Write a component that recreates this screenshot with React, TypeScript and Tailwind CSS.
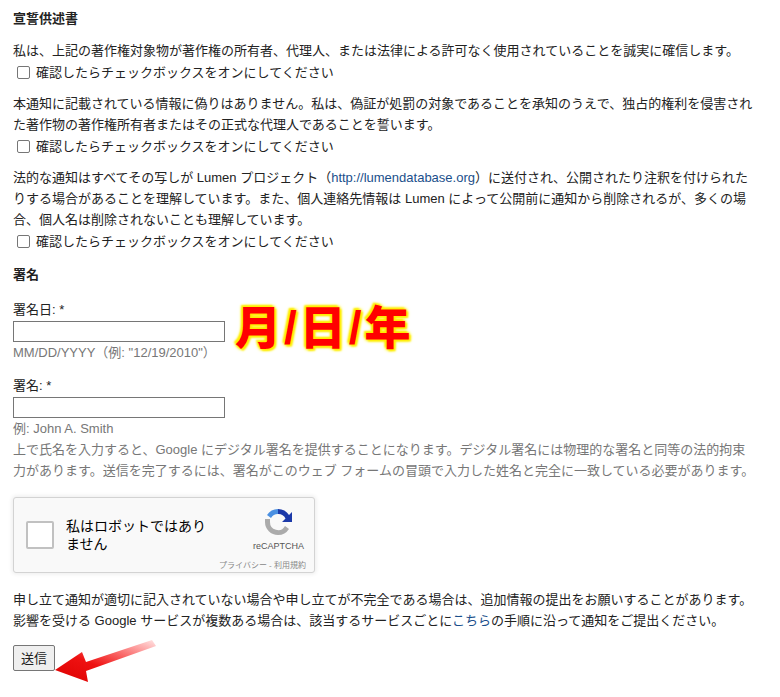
export default function App() {
  const cb = (
    <label className="flex items-center gap-[6px] ml-[4px] h-[22px]">
      <span className="w-[13px] h-[13px] border border-[#767676] rounded-[2px] bg-white" />
      <span>確認したらチェックボックスをオンにしてください</span>
    </label>
  );
  return (
    <div className="w-[780px] h-[697px] bg-white text-[13px] leading-[21px] text-[#222] pl-[13px] pr-[24px] pt-[8px] relative overflow-hidden" style={{ fontFamily: '"Liberation Sans", Arial, "Noto Sans CJK JP", sans-serif' }}>
      <div className="font-bold h-[22px]">宣誓供述書</div>
      <div className="mt-[10px]">私は、上記の著作権対象物が著作権の所有者、代理人、または法律による許可なく使用されていることを誠実に確信します。</div>
      {cb}
      <div className="mt-[10px]">本通知に記載されている情報に偽りはありません。私は、偽証が処罰の対象であることを承知のうえで、独占的権利を侵害された著作物の著作権所有者またはその正式な代理人であることを誓います。</div>
      {cb}
      <div className="mt-[10px]">法的な通知はすべてその写しが Lumen プロジェクト（<span className="text-[#1a4f8b]">http://lumendatabase.org</span>）に送付され、公開されたり注釈を付けられたりする場合があることを理解しています。また、個人連絡先情報は Lumen によって公開前に通知から削除されるが、多くの場合、個人名は削除されないことも理解しています。</div>
      {cb}
      <div className="font-bold mt-[12px]">署名</div>
      <div className="mt-[14px]">署名日: *</div>
      <div className="w-[212px] h-[21px] border border-[#767676] bg-white mt-[1px]" />
      <div className="text-[#777]">MM/DD/YYYY（例: "12/19/2010"）</div>
      <div className="mt-[12px]">署名: *</div>
      <div className="w-[212px] h-[21px] border border-[#767676] bg-white mt-[1px]" />
      <div className="text-[#777]">例: John A. Smith</div>
      <div className="text-[#777]">上で氏名を入力すると、Google にデジタル署名を提供することになります。デジタル署名には物理的な署名と同等の法的拘束力があります。送信を完了するには、署名がこのウェブ フォームの冒頭で入力した姓名と完全に一致している必要があります。</div>
      <div className="mt-[16px] w-[302px] h-[76px] border border-[#d3d3d3] rounded-[3px] bg-[#f9f9f9] shadow-[0_0_4px_1px_rgba(0,0,0,0.08)] flex items-center pl-[12px] relative">
        <div className="w-[28px] h-[28px] border-2 border-[#c1c1c1] rounded-[2px] bg-white" />
        <div className="ml-[12px] text-[14px] leading-[18px] text-[#000] w-[150px]">私はロボットではありません</div>
        <div className="absolute right-[10px] top-[8px] flex flex-col items-center">
          <svg width="32" height="32" viewBox="0 0 32 32">
            <path d="M16 3a13 13 0 0 1 11 6l3-3v10h-10l3.5-3.5A8 8 0 0 0 16 8z" fill="#1c3aa9" />
            <path d="M16 3a13 13 0 0 0-11 6l4 3a8 8 0 0 1 7-4z" fill="#4a90e2" />
            <path d="M3 16a13 13 0 0 0 13 13a13 13 0 0 0 11-6l-4-3a8 8 0 0 1-15-4v-3h-5z" fill="#ababab" />
          </svg>
          <div className="text-[9px] leading-[11px] text-[#555] mt-[3px]">reCAPTCHA</div>
        </div>
        <div className="absolute right-[8px] bottom-[1px] text-[8px] leading-[10px] text-[#888]">プライバシー - 利用規約</div>
      </div>
      <div className="mt-[16px]">申し立て通知が適切に記入されていない場合や申し立てが不完全である場合は、追加情報の提出をお願いすることがあります。影響を受ける Google サービスが複数ある場合は、該当するサービスごとに<span className="text-[#1a4f8b]">こちら</span>の手順に沿って通知をご提出ください。</div>
      <button className="mt-[14px] px-[7px] h-[26px] border border-[#767676] rounded-[2px] bg-[#efefef] text-[13px]">送信</button>

      <div className="absolute left-[235px] top-[302px] text-[46px] leading-[52px] font-black text-[#ff0000] tracking-[3px]" style={{ textShadow: "0 0 3px #ffee00, 0 0 3px #ffee00, 0 0 4px #ffee00, 2px 2px 2px #ffee00, -2px -2px 2px #ffee00" }}>
        月/日/年
      </div>
      <svg className="absolute left-[52px] top-[638px]" width="110" height="45" viewBox="0 0 110 45">
        <defs>
          <linearGradient id="g" x1="1" y1="0" x2="0" y2="1">
            <stop offset="0" stopColor="#ff0000" stopOpacity="0.1" />
            <stop offset="0.6" stopColor="#ee1111" />
            <stop offset="1" stopColor="#dd0000" />
          </linearGradient>
        </defs>
        <path d="M100 2 L34 24 L30 14 L3 32 L36 44 L34 33 L104 8 Z" fill="url(#g)" />
      </svg>
    </div>
  );
}
